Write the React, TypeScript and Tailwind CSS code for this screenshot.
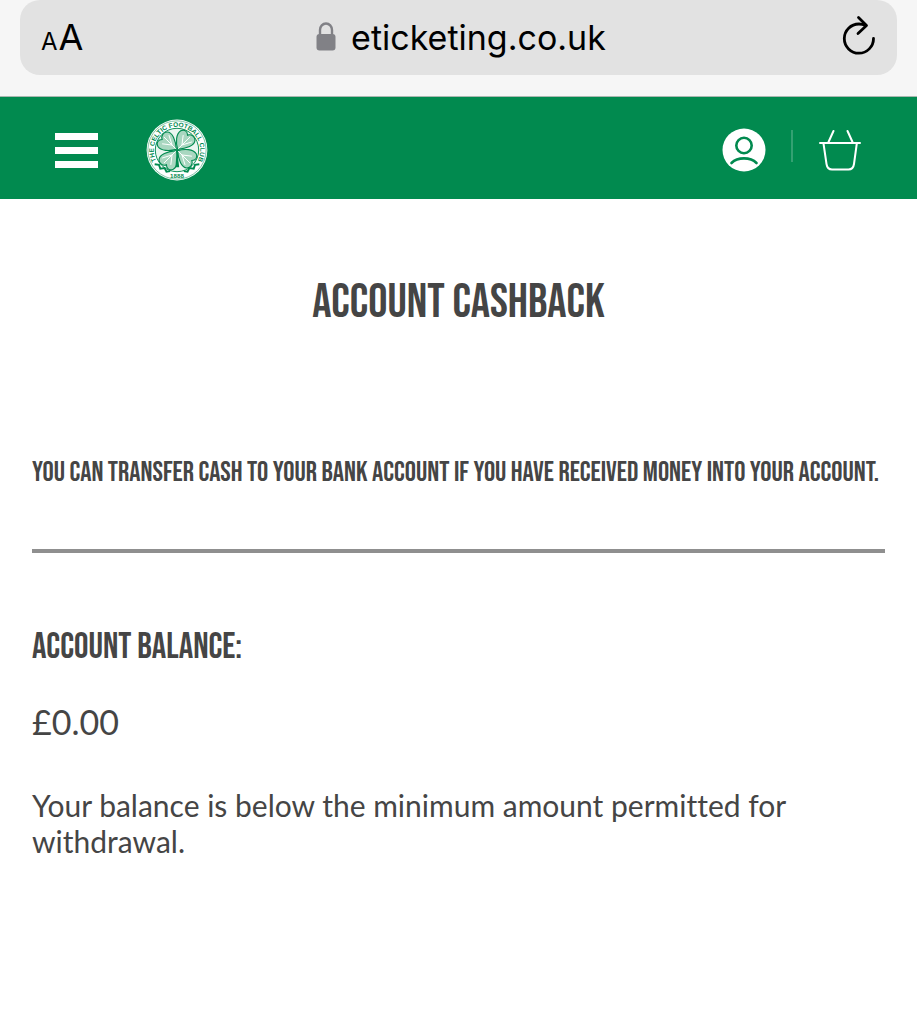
import type { ReactNode } from 'react';

const condensed = "font-['Bebas_Neue','Open_Sans_Condensed','Roboto_Condensed',sans-serif] font-normal uppercase";

function LockIcon() {
  return (
    <svg className="h-[30px] w-5 overflow-visible text-[#818186]" viewBox="0 0 20 30" fill="none" aria-hidden="true">
      <path d="M4 12V7a6 6.500 0 0 1 12 0V12" stroke="currentColor" strokeWidth="2.4" />
      <rect x="0.5" y="11" width="19" height="16.500" rx="3" fill="currentColor" />
    </svg>
  );
}

function ReloadIcon() {
  return (
    <svg className="h-10 w-8 overflow-visible" viewBox="0 0 32 40" fill="none" stroke="#000" strokeWidth="2.8" strokeLinecap="round" strokeLinejoin="round" aria-hidden="true">
      <path d="M30.500 20.500A14.600 14.600 0 1 1 16 6q3.500 0 6.500 1.500" />
      <path d="M15.500 -0.500 23.500 7.500l-8.500 8" />
    </svg>
  );
}

function UserIcon() {
  return (
    <svg className="size-11 overflow-visible" viewBox="0 0 44 44" fill="none" aria-hidden="true">
      <circle cx="23" cy="22" r="21.500" fill="#fff" />
      <circle cx="23" cy="17.500" r="7.700" stroke="#018a4f" strokeWidth="2.600" />
      <path d="M10.500 35c3-3 7.500-4.600 12.500-4.600s9.500 1.600 12.500 4.600" stroke="#018a4f" strokeWidth="2.600" strokeLinecap="round" />
    </svg>
  );
}

function BasketIcon() {
  return (
    <svg className="h-11 w-[42px]" viewBox="0 0 42 44" fill="none" stroke="#fff" strokeWidth="2" strokeLinecap="round" strokeLinejoin="round" aria-hidden="true">
      <path d="M1 15h40M14.500 3 9.500 14M28.500 3l5 11" />
      <path d="M4.500 15.500 7.500 36q.8 5.500 5.500 5.500h16.500q4.700 0 5.500-5.500l2.800-20.500" />
    </svg>
  );
}

function ClubCrest() {
  return (
    <svg className="size-[62px]" viewBox="0 0 100 100" aria-hidden="true">
      <defs>
        <path id="crest-top" d="M15.500 65A37.500 37.500 0 1 1 84.500 65" />
      </defs>
      <circle cx="50" cy="50" r="49" fill="#fff" />
      <circle cx="50" cy="50" r="47" fill="none" stroke="#018a4f" strokeWidth="0.8" />
      <circle cx="50" cy="50" r="35" fill="#eaf6f0" stroke="#018a4f" strokeWidth="1.500" />
      <text className="font-['Liberation_Sans',sans-serif] font-bold" fontSize="10.500" fill="#018a4f">
        <textPath href="#crest-top" startOffset="50%" textAnchor="middle">THE CELTIC FOOTBALL CLUB</textPath>
      </text>
      {[0, 90, 180, 270].map((angle) => (
        <g key={angle} transform={`rotate(${angle} 50 50)`}>
          <path
            d="M49 49C38 52 24 52 19 44c-3-6 1-11 7-11-2-6 2-12 8-12 9 0 14 14 15 28Z"
            fill="#a9d7c0"
            stroke="#018a4f"
            strokeWidth="1.800"
          />
          <path d="M48 48 29 29M42 42l-16-2M42 42l-5-16" fill="none" stroke="#fff" strokeWidth="1.600" />
        </g>
      ))}
      <path d="M49.500 50q-1 14-2 28h6q-2-14-2-28Z" fill="#018a4f" />
      <path d="m14 73 7 1 2 6 7-1 3 6 6-1M86 73l-7 1-2 6-7-1-3 6-6-1" fill="none" stroke="#018a4f" strokeWidth="3" />
      <text x="50" y="95" textAnchor="middle" className="font-['Liberation_Sans',sans-serif] font-bold" fontSize="10" fill="#018a4f">1888</text>
    </svg>
  );
}

function IconButton({ label, children }: { label: string; children: ReactNode }) {
  return (
    <button type="button" aria-label={label} className="flex cursor-pointer items-center justify-center">
      {children}
    </button>
  );
}

export default function App() {
  return (
    <div className="min-h-screen bg-white text-[#454545]">
      {/* Browser address bar */}
      <div className="border-b border-[#a9b8b0] bg-[#f6f6f6] px-5 pb-[21px] font-['Inter',sans-serif] text-black">
        <div className="flex h-[75px] items-center justify-between rounded-[20px] bg-[#e2e2e2] pr-[22px] pl-[21px]">
          <button type="button" aria-label="Text size" className="flex w-[42px] items-baseline gap-px pt-1">
            <span className="text-2xl leading-10">A</span>
            <span className="text-4xl leading-10">A</span>
          </button>
          <div className="flex items-center gap-[15px] pr-1">
            <LockIcon />
            <span className="text-[34px] leading-10">eticketing.co.uk</span>
          </div>
          <IconButton label="Reload">
            <ReloadIcon />
          </IconButton>
        </div>
      </div>

      {/* Site header */}
      <header className="flex h-[102px] items-center justify-between bg-[#018a4f] pt-1 pr-14 pl-[55px]">
        <div className="flex items-center gap-12">
          <IconButton label="Menu">
            <span className="flex w-[43px] flex-col gap-[7px]">
              <span className="h-[7px] bg-white" />
              <span className="h-[7px] bg-white" />
              <span className="h-[7px] bg-white" />
            </span>
          </IconButton>
          <a href="#" aria-label="The Celtic Football Club">
            <ClubCrest />
          </a>
        </div>
        <div className="flex items-center gap-[26px]">
          <IconButton label="My account">
            <UserIcon />
          </IconButton>
          <div className="mb-2 h-8 w-0.5 bg-[#34a172]" />
          <IconButton label="Basket">
            <BasketIcon />
          </IconButton>
        </div>
      </header>

      <main className="px-8 pt-[74px] pb-16">
        <h1 className={`${condensed} text-center text-5xl leading-[60px]`}>Account Cashback</h1>
        <p className={`${condensed} mt-[120px] text-[28px] leading-10`}>
          You can transfer cash to your bank account if you have received money into your account.
        </p>
        <hr className="mt-14 border-t-4 border-[#8f8f8f]" />
        <h2 className={`${condensed} mt-[70px] text-4xl leading-[50px]`}>Account Balance:</h2>
        <p className="mt-6 font-['Lato',sans-serif] text-[34px] leading-[50px]">£0.00</p>
        <p className="mt-10 font-['Lato',sans-serif] text-3xl leading-9 [font-variant-ligatures:none]">
          Your balance is below the minimum amount permitted for withdrawal.
        </p>
      </main>
    </div>
  );
}
